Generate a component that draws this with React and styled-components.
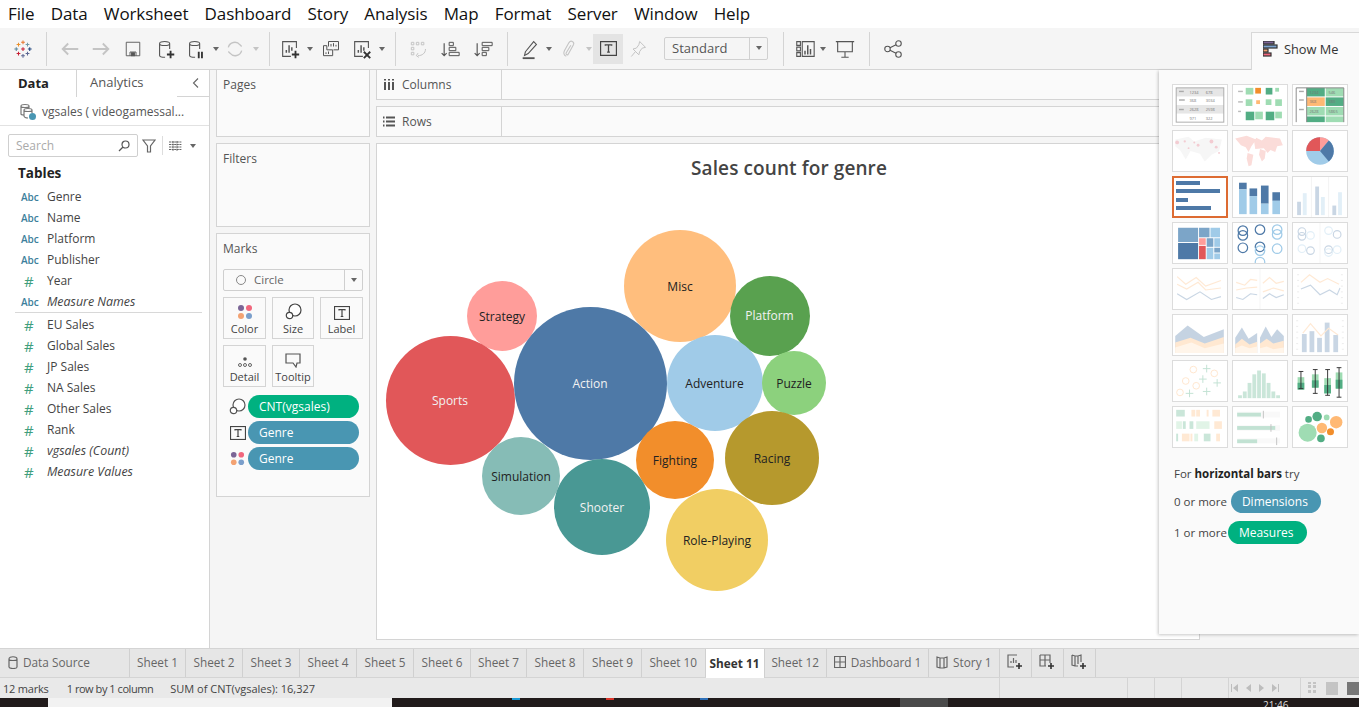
import React from 'react';
import styled, { createGlobalStyle } from 'styled-components';

const GlobalStyle = createGlobalStyle`
  html, body { margin: 0; padding: 0; background: #fff; }
  body { font-family: "Open Sans", "Liberation Sans", sans-serif; overflow: hidden; }
  * { box-sizing: border-box; }
`;

const Page = styled.div`
  width: 1359px;
  height: 707px;
  display: flex;
  flex-direction: column;
  position: relative;
  overflow: hidden;
`;

/* menu */
const MenuBar = styled.div`
  height: 28px;
  display: flex;
  align-items: center;
  padding: 0 0 2px 8px;
  gap: 16.2px;
  background: #fff;
  color: #111;
  font-size: 17px;
  font-family: "Open Sans", sans-serif;
  letter-spacing: -0.1px;
`;

/* toolbar */
const Toolbar = styled.div`
  height: 42px;
  display: flex;
  align-items: center;
  padding-left: 8px;
  background: #f5f5f5;
  border-bottom: 1px solid #d4d4d4;
`;
const Tool = styled.div`
  width: ${p => p.$w || 30}px;
  height: 30px;
  display: flex;
  align-items: center;
  justify-content: center;
  flex: none;
  color: ${p => (p.$off ? '#c4c4c4' : '#555')};
  background: ${p => (p.$active ? '#e4e4e4' : 'transparent')};
`;
const ToolDivider = styled.div`
  width: 1px;
  height: 34px;
  flex: none;
  background: #d4d4d4;
  margin: 0 ${p => p.$r ?? 8}px 0 ${p => p.$l ?? 8}px;
`;
const Caret = styled.span`
  width: 0;
  height: 0;
  flex: none;
  border-left: 3.5px solid transparent;
  border-right: 3.5px solid transparent;
  border-top: 4px solid ${p => (p.$off ? '#c4c4c4' : '#666')};
`;
const FitSelect = styled.div`
  width: 104px;
  height: 23px;
  flex: none;
  margin: 0 15px 0 11px;
  display: flex;
  align-items: center;
  justify-content: space-between;
  border: 1px solid #d0d0d0;
  border-radius: 2px;
  background: #f5f5f5;
  color: #555;
  font-size: 13px;
  padding: 0 0 1px 7px;
`;
const SelectArrow = styled.div`
  width: 18px;
  height: 21px;
  display: flex;
  align-items: center;
  justify-content: center;
  border-left: 1px solid #d0d0d0;
`;
const ShowMeTab = styled.div`
  width: 108px;
  height: 38px;
  margin-left: auto;
  align-self: flex-end;
  margin-bottom: -1px;
  display: flex;
  align-items: center;
  gap: 6px;
  padding: 0 0 6px 11px;
  background: #fafafa;
  border: 1px solid #d8d8d8;
  border-bottom: none;
  border-right: none;
  font-size: 12.8px;
  color: #333;
  position: relative;
  z-index: 3;
`;

/* main */
const Main = styled.div`
  height: 578px;
  display: flex;
  background: #f5f5f5;
`;
const DataPane = styled.div`
  width: 210px;
  flex: none;
  background: #fff;
  border-right: 1px solid #d4d4d4;
  display: flex;
  flex-direction: column;
`;
const PaneTabs = styled.div`
  height: 27px;
  display: flex;
  align-items: center;
  font-size: 13px;
  color: #444;
  border-bottom: 1px solid #d4d4d4;
`;
const PaneTab = styled.div`
  width: ${p => p.$w}px;
  height: 27px;
  display: flex;
  align-items: center;
  padding: 0 0 2px ${p => p.$pad}px;
  background: #fff;
  font-weight: ${p => (p.$on ? 700 : 400)};
  color: ${p => (p.$on ? '#222' : '#555')};
  border-right: ${p => (p.$on ? '1px solid #d4d4d4' : 'none')};
  margin-bottom: ${p => (p.$on ? '-1px' : '0')};
`;
const PaneCollapse = styled.div`
  margin-left: auto;
  padding-right: 7px;
  display: flex;
  color: #666;
`;
const SourceRow = styled.div`
  height: 29px;
  display: flex;
  align-items: center;
  gap: 6px;
  padding-left: 20px;
  font-size: 12px;
  color: #555;
  border-bottom: 1px solid #e2e2e2;
`;
const SearchRow = styled.div`
  height: 25px;
  margin-top: 7px;
  padding-left: 8px;
  display: flex;
  align-items: center;
`;
const SearchBox = styled.div`
  width: 130px;
  height: 23px;
  display: flex;
  align-items: center;
  justify-content: space-between;
  padding: 0 7px;
  border: 1px solid #cfcfcf;
  border-radius: 2px;
  font-size: 12px;
  color: #aaa;
`;
const RowDivider = styled.div`
  width: 1px;
  height: 19px;
  background: #ddd;
  margin: 0 6px;
`;
const TablesTitle = styled.div`
  font-size: 13.5px;
  font-weight: 700;
  color: #222;
  padding-left: 18px;
  margin-top: 5px;
  height: 21px;
  line-height: 21px;
`;
const FieldList = styled.div`
  margin-top: 2px;
  display: flex;
  flex-direction: column;
`;
const FieldRow = styled.div`
  height: 21px;
  display: flex;
  align-items: center;
  font-size: ${p => (p.$italic ? '12.4px' : '12px')};
  color: #444;
  font-style: ${p => (p.$italic ? 'italic' : 'normal')};
`;
const FieldType = styled.span`
  width: 47px;
  flex: none;
  padding-left: 21px;
  font-size: 10px;
  font-style: normal;
  color: ${p => (p.$measure ? '#3f9e7d' : '#3d7f9c')};
  font-weight: 600;
`;
const FieldHash = styled(FieldType)`
  font-size: 15px;
  font-weight: 400;
  padding-left: 24px;
`;
const FieldSeparator = styled.div`
  height: 1px;
  background: #d8d8d8;
  margin: 0 7px 1px 15px;
`;

const ShelfColumn = styled.div`
  width: 166px;
  flex: none;
  padding: 0 6px;
  display: flex;
  flex-direction: column;
  gap: 6px;
`;
const Card = styled.div`
  height: ${p => p.$h}px;
  flex: none;
  background: #fafafa;
  border: 1px solid #d4d4d4;
  border-top: ${p => (p.$flush ? 'none' : '1px solid #d4d4d4')};
  padding: 7px 6px 0;
  font-size: 12px;
  color: #555;
`;
const CardTitle = styled.div`
  height: 16px;
  line-height: 16px;
`;
const MarkSelect = styled.div`
  height: 22px;
  margin-top: 12px;
  display: flex;
  align-items: center;
  border: 1px solid #cfcfcf;
  border-radius: 2px;
  padding: 0 0 1px 12px;
  gap: 8px;
  font-size: 11.5px;
  color: #666;
`;
const MarkDot = styled.span`
  width: 10px;
  height: 10px;
  border-radius: 50%;
  border: 1.5px solid #888;
`;
const MarkArrow = styled.div`
  margin-left: auto;
  width: 18px;
  height: 20px;
  display: flex;
  align-items: center;
  justify-content: center;
  border-left: 1px solid #cfcfcf;
`;
const MarkGrid = styled.div`
  display: grid;
  grid-template-columns: 43px 42px 43px;
  grid-auto-rows: 42px;
  gap: 6px;
  margin-top: 6px;
`;
const MarkBtn = styled.div`
  border: 1px solid #d4d4d4;
  display: flex;
  flex-direction: column;
  align-items: center;
  justify-content: flex-end;
  gap: 1px;
  padding-bottom: 2px;
  font-size: 11px;
  color: #444;
`;
const PillList = styled.div`
  margin-top: 8px;
  display: flex;
  flex-direction: column;
  gap: 3px;
`;
const PillRow = styled.div`
  height: 23px;
  display: flex;
  align-items: center;
  gap: 2px;
  padding-left: 6px;
`;
const PillIcon = styled.div`
  width: 17px;
  display: flex;
  justify-content: center;
  color: #555;
`;
const Pill = styled.div`
  width: ${p => p.$w || 111}px;
  height: 23px;
  border-radius: 12px;
  display: flex;
  align-items: center;
  padding-left: ${p => p.$pad || 11}px;
  background: ${p => (p.$measure ? '#00b180' : '#4996b2')};
  color: #fff;
  font-size: 12px;
`;

const Workspace = styled.div`
  flex: 1;
  min-width: 0;
  display: flex;
  flex-direction: column;
  gap: 6px;
`;
const ShelfRow = styled.div`
  height: ${p => p.$h}px;
  flex: none;
  display: flex;
  background: #fafafa;
  border: 1px solid #d4d4d4;
  border-top: ${p => (p.$flush ? 'none' : '1px solid #d4d4d4')};
  width: 790px;
`;
const ShelfLabel = styled.div`
  width: 125px;
  display: flex;
  align-items: center;
  gap: 7px;
  padding-left: 6px;
  font-size: 12px;
  color: #555;
  border-right: 1px solid #d4d4d4;
`;
const Viz = styled.div`
  width: 824px;
  height: 497px;
  flex: none;
  background: #fff;
  border: 1px solid #d4d4d4;
  position: relative;
`;
const VizTitle = styled.div`
  height: 50px;
  padding-top: 11px;
  width: 824px;
  text-align: center;
  font-size: 19px;
  font-weight: 600;
  color: #444;
  letter-spacing: 0.1px;
`;
const Bubble = styled.div`
  position: absolute;
  border-radius: 50%;
  display: flex;
  align-items: center;
  justify-content: center;
  font-size: 12px;
  color: ${p => (p.$dark ? '#222' : '#f2f2f2')};
  background: ${p => p.$bg};
`;

/* show me */
const ShowMePanel = styled.div`
  position: absolute;
  left: 1159px;
  top: 70px;
  width: 200px;
  height: 564px;
  background: #fafafa;
  box-shadow: -1px 1px 3px rgba(0, 0, 0, 0.22);
  padding: 14px 0 0 13px;
  z-index: 2;
  font-size: 11.5px;
  color: #444;
`;
const ThumbGrid = styled.div`
  display: grid;
  grid-template-columns: repeat(3, 56px);
  grid-auto-rows: 42px;
  gap: 4px;
`;
const Thumb = styled.div`
  background: #fff;
  border: ${p => (p.$on ? '2px solid #dd6b32' : '1px solid #dcdcdc')};
  overflow: hidden;
  display: flex;
  svg { width: 100%; height: 100%; display: block; }
`;
const HintTitle = styled.div`
  margin: 18px 0 0 2px;
  height: 16px;
  line-height: 16px;
  b { color: #222; font-weight: 700; }
`;
const HintRow = styled.div`
  display: flex;
  align-items: center;
  gap: ${p => p.$gap}px;
  margin: 8px 0 0 2px;
  height: 23px;
`;

/* tabs + status */
const TabStrip = styled.div`
  height: 30px;
  display: flex;
  background: #e6e6e6;
  border-top: 1px solid #d4d4d4;
  border-bottom: 1px solid #d4d4d4;
`;
const SheetTab = styled.div`
  width: ${p => p.$w}px;
  flex: none;
  display: flex;
  align-items: center;
  justify-content: ${p => (p.$left ? 'flex-start' : 'center')};
  gap: 5px;
  padding: 0 0 2px ${p => (p.$left ? '8px' : '0')};
  border-right: 1px solid #d0d0d0;
  font-size: 11.8px;
  color: ${p => (p.$on ? '#333' : '#666')};
  font-weight: ${p => (p.$on ? 700 : 400)};
  background: ${p => (p.$on ? '#fff' : 'transparent')};
  margin-bottom: ${p => (p.$on ? '-1px' : '0')};
`;
const StatusBar = styled.div`
  height: 20px;
  display: flex;
  align-items: center;
  background: #e9e9e9;
  font-size: 11px;
  color: #444;
`;
const StatusText = styled.span`
  margin-left: ${p => p.$l}px;
  letter-spacing: ${p => p.$ls}px;
`;
const StatusCell = styled.div`
  width: ${p => p.$w}px;
  height: 20px;
  flex: none;
  display: flex;
  align-items: center;
  gap: ${p => p.$gap || 8}px;
  padding-left: ${p => p.$pad || 0}px;
  border-left: 1px solid #d4d4d4;
`;
const NavMark = styled.span`
  width: 0;
  height: 0;
  border-top: 4px solid transparent;
  border-bottom: 4px solid transparent;
  border-${p => (p.$right ? 'left' : 'right')}: 5px solid #bdbdbd;
`;
const NavStop = styled.span`
  width: 1px;
  height: 8px;
  margin: 0 -7px;
  background: #bdbdbd;
`;
const ViewGrid = styled.span`
  width: 12px;
  height: 12px;
  background: repeating-linear-gradient(90deg, #c4c4c4 0 3px, transparent 3px 4.5px),
    repeating-linear-gradient(0deg, #e9e9e9 0 1.5px, transparent 1.5px 4.5px);
  background-blend-mode: lighten;
`;
const ViewBox = styled.span`
  width: 12px;
  height: 13px;
  flex: none;
  background: ${p => p.$c};
`;
const Taskbar = styled.div`
  height: 9px;
  display: flex;
  background: #211b1b;
  color: #ddd;
  font-size: 10px;
  position: relative;
  overflow: hidden;
`;
const TaskWindow = styled.div`
  width: ${p => p.$w}px;
  margin-left: ${p => p.$l}px;
  background: ${p => p.$c};
  flex: none;
`;
const TaskDot = styled.span`
  width: ${p => p.$w || 8}px;
  height: 2px;
  margin-left: ${p => p.$l}px;
  background: ${p => p.$c};
  flex: none;
`;
const Clock = styled.span`
  position: absolute;
  left: 1263px;
  top: 1px;
  line-height: 12px;
`;

const Svg = styled.svg`
  display: block;
  fill: none;
  stroke: currentColor;
  stroke-width: 1.2;
  flex: none;
`;

const Icon = ({ s = 24, children }) => <Svg width={s} height={s} viewBox="0 0 24 24">{children}</Svg>;

const TableauLogo = () => {
  const c = [[12, 3, '#e8762d'], [12, 21, '#5b6591'], [3, 12, '#59879b'], [21, 12, '#1f447e'], [6, 6, '#eb912b'], [18, 6, '#7099a6'], [6, 18, '#c72035'], [18, 18, '#5c6692'], [12, 12, '#c72035']];
  return (
    <Icon s={18}>
      {c.map(([x, y, col]) => (
        <path key={x + '-' + y} d={`M${x - 2.5} ${y}h5M${x} ${y - 2.5}v5`} stroke={col} strokeWidth="1.4" />
      ))}
    </Icon>
  );
};
const Plus = ({ x, y }) => <path d={`M${x - 4} ${y}h8M${x} ${y - 4}v8`} stroke="#333" strokeWidth="2" />;
const BarBox = ({ children }) => (
  <Icon s={22}>
    <path d="M19 11V4H4v16h9" />
    <path d="M8 16v-3M11 16V8M14 14v-4" strokeWidth="1.6" />
    {children}
  </Icon>
);
const Cylinder = ({ children }) => (
  <Icon s={22}>
    <path d="M5 6c0-3 11-3 11 0v6M5 6c0 3 11 3 11 0M5 6v13c0 1.5 3 2 6 2" />
    {children}
  </Icon>
);
const ColorDots = ({ s = 16 }) => (
  <Svg width={s} height={s} viewBox="0 0 16 16" stroke="none">
    <circle cx="4" cy="4" r="3" fill="#7b6596" stroke="none" />
    <circle cx="12" cy="4" r="3" fill="#f1677d" stroke="none" />
    <circle cx="4" cy="12" r="3" fill="#f3a272" stroke="none" />
    <circle cx="12" cy="12" r="3" fill="#7b9fcb" stroke="none" />
  </Svg>
);
const SizeIcon = () => (
  <Svg width={17} height={17} viewBox="0 0 17 17">
    <circle cx="10" cy="7" r="6" fill="#fff" />
    <circle cx="4.5" cy="12.5" r="3.2" fill="#fff" />
  </Svg>
);
const TextBox = ({ s = 16 }) => (
  <Svg width={s} height={s - 2} viewBox="0 0 16 14">
    <rect x=".5" y=".5" width="15" height="13" stroke="#444" />
    <path d="M5 4.5V3.6h6v.9M8 3.6v7M6.7 10.5h2.600" stroke="#444" />
  </Svg>
);
const DownCaret = () => <Caret />;

const bubbles = [
  ['Strategy', 502, 316, 35, '#ff9d9a', true],
  ['Misc', 680, 286, 56, '#ffbe7d', true],
  ['Platform', 769.5, 315.5, 40, '#59a14f', false],
  ['Sports', 450, 400, 64.5, '#e15759', false],
  ['Action', 590, 383, 76.5, '#4e79a7', false],
  ['Adventure', 714.5, 383, 48, '#a0cbe8', true],
  ['Puzzle', 794, 383, 32, '#8cd17d', true],
  ['Simulation', 521, 476, 39, '#86bcb6', true],
  ['Fighting', 675, 460, 39, '#f28e2b', true],
  ['Racing', 772, 458, 47, '#b6992d', true],
  ['Shooter', 602, 507, 48, '#499894', false],
  ['Role-Playing', 717, 540, 51, '#f1ce63', true],
];

const B = '#4e79a7', L = '#a0cbe8', G = '#9fdcb3', D = '#52ad84', O = '#ffb974';
const line = (pts, c, w = 1.2) => <polyline points={pts} fill="none" stroke={c} strokeWidth={w} />;
const rect = (x, y, w, h, c) => <rect key={`${x}-${y}-${w}`} x={x} y={y} width={w} height={h} fill={c} />;
const T = (x, y, t) => <text x={x} y={y} fontSize="4.2" fill="#777" fontFamily="Open Sans">{t}</text>;

const thumbs = [
  <>
    {rect(3, 3, 50, 36, '#fff')}
    {rect(3, 3, 50, 9, '#e6e6e6')}{rect(3, 21, 50, 9, '#e6e6e6')}
    {rect(6, 6, 5, 1.5, '#aaa')}{rect(6, 15, 6, 1.5, '#aaa')}{rect(6, 25, 5, 1.5, '#aaa')}
    {T(17, 9, '1234')}{T(34, 9, '678')}{T(17, 18, '368')}{T(34, 18, '3034')}{T(17, 27, '2628')}{T(34, 27, '2598')}{T(17, 37, '971')}{T(34, 37, '322')}
    <rect x="3" y="3" width="50" height="36" fill="none" stroke="#aaa" />
  </>,
  <>
    {[[5, 6, 5, 1.5, '#bbb'], [5, 17, 5, 1.5, '#bbb'], [5, 27, 3, 1.5, '#bbb']].map(r => rect(...r))}
    {rect(13, 3, 8, 7, G)}{rect(23, 3, 6, 6, '#f28e2b')}{rect(34, 3, 7, 7, D)}{rect(44, 3, 4, 4, G)}
    {rect(13, 15, 7, 7, G)}{rect(24, 16, 4, 4, O)}{rect(34, 15, 6, 6, G)}{rect(44, 15, 7, 7, G)}
    {rect(13, 28, 9, 9, D)}{rect(23, 28, 8, 8, G)}{rect(34, 28, 9, 9, D)}{rect(44, 28, 7, 7, G)}
  </>,
  <>
    {[[6, 6], [6, 15], [6, 25]].map(([x, y]) => rect(x, y, 5, 1.5, '#aaa'))}
    {rect(14, 3, 19, 9, D)}{rect(34, 3, 19, 9, G)}{rect(14, 13, 19, 9, O)}{rect(34, 13, 19, 9, D)}
    {rect(14, 23, 19, 9, G)}{rect(34, 23, 19, 9, G)}{rect(14, 33, 19, 6, D)}{rect(34, 33, 19, 6, G)}
    {T(17, 9.5, '1234')}{T(37, 9.5, '546')}{T(17, 19, '368')}{T(37, 19, '380')}{T(17, 29, '2628')}{T(37, 29, '5865')}
    <path d="M3 3h50v36M14 3v36M3 3v36" fill="none" stroke="#888" />
  </>,
  <>
    <path d="M2 9l14-3 6 5 12-4 17 2-3 12-8 4-7 7-5-8-10-3-5 9-6-10-5-4z" fill="#f6f6f6" />
    {[[4, 12, 2], [12, 11, 1.2], [22, 12, 1], [26, 15, 1.5], [40, 11, 2], [45, 17, 1.5], [16, 18, 1], [48, 23, 1]].map(([x, y, r]) => <circle key={x} cx={x} cy={y} r={r} fill="#f3ccd2" />)}
  </>,
  <path d="M2 8l12-3 10 4-5 7-3 6-3-5-5-2zM15 23l6 2-2 11-3 1-2-8zM24 7l6 3 4-4 15 2 3 7-6 1-2 6-5-2-3 3-4-5-9 1-1-7z M28 19l6 2-1 8-3 3-3-7z" fill="#fbdcd9" />,
  <>
    <circle cx="28" cy="21" r="14.500" fill={L} />
    <path d="M28 21V6.500A14.500 14.500 0 0 0 13.500 21z" fill="#e15759" />
    <path d="M28 21V6.500A14.500 14.500 0 0 1 37.300 9.900z" fill="#ff9d9a" />
    <path d="M28 21L37.300 9.900A14.500 14.500 0 0 1 37.300 32.100z" fill={B} />
  </>,
  <>
    {rect(4, 5, 24, 4, B)}{rect(4, 13, 44, 4, B)}{rect(4, 22, 12, 4, B)}{rect(4, 30, 35, 4, B)}
  </>,
  <>
    {rect(6, 6, 8, 7, B)}{rect(6, 13, 8, 26, L)}{rect(17, 12, 8, 8, B)}{rect(17, 20, 8, 19, L)}
    {rect(29, 9, 8, 19, B)}{rect(29, 28, 8, 11, L)}{rect(41, 16, 8, 9, B)}{rect(41, 25, 8, 14, L)}
  </>,
  <g opacity=".3">
    <path d="M19 0v42M37 0v42" stroke="#bbb" strokeWidth=".6" />
    {rect(4, 26, 4, 14, B)}{rect(10, 17, 4, 23, L)}{rect(23, 10, 4, 30, B)}{rect(29, 21, 4, 19, L)}{rect(41, 30, 4, 10, B)}{rect(47, 16, 4, 24, L)}
  </g>,
  <>
    {rect(5, 5, 21, 15, '#7ca5c8')}{rect(5, 21, 21, 17, B)}{rect(27, 5, 11, 10, '#7ca5c8')}{rect(27, 16, 7, 7, '#ff9d9a')}{rect(27, 24, 7, 14, '#e15759')}
    {rect(39, 5, 10, 10, L)}{rect(35, 16, 7, 9, '#7ca5c8')}{rect(43, 16, 6, 9, L)}{rect(35, 26, 7, 12, L)}{rect(43, 26, 6, 5, '#7ca5c8')}{rect(43, 32, 6, 6, L)}
  </>,
  <g fill="none" strokeWidth="1.3">
    {[[10, 8, B], [10, 13, B], [28, 7, B], [10, 26, B], [28, 25, B], [28, 29, L], [46, 7, L], [46, 12, L], [46, 27, L], [28, 41, L]].map(([x, y, c], i) => <circle key={i} cx={x} cy={y} r="5" stroke={c} />)}
  </g>,
  <g fill="none" strokeWidth="1.2" opacity=".3">
    <path d="M28 0v42" stroke="#bbb" strokeWidth=".5" />
    {[[9, 9, B], [9, 14, B], [18, 13, L], [9, 27, L], [18, 29, B], [37, 8, L], [46, 12, B], [46, 28, L], [37, 28, B], [37, 31, L]].map(([x, y, c], i) => <circle key={i} cx={x} cy={y} r="4" stroke={c} />)}
  </g>,
  <g opacity=".3">
    {line('4,8 13,16 24,9 34,18 50,12', O)}{line('4,16 14,21 26,14 34,22 50,20', O)}{line('4,26 14,32 28,24 40,32 50,29', B)}
  </g>,
  <g opacity=".3">
    <path d="M28 0v42" stroke="#bbb" strokeWidth=".5" />
    {line('3,14 12,17 18,11 25,12', O)}{line('3,22 14,20 25,19', O)}{line('3,30 10,32 18,26 25,27', B)}
    {line('31,15 38,9 45,15 53,13', O)}{line('31,24 42,20 53,23', O)}{line('31,31 38,26 45,30 53,27', B)}
  </g>,
  <g opacity=".3">
    {line('8,14 17,6 28,14 36,10 48,16', O)}{line('8,21 18,17 28,27 38,22 46,27 49,20', B)}
    <path d="M4 6h2M4 12h2M4 18h2M4 24h2M4 30h2M4 36h2M50 6h2M50 12h2M50 18h2M50 24h2M50 30h2M50 36h2" stroke="#999" strokeWidth=".6" />
  </g>,
  <g opacity=".32">
    <path d="M2 22l13-11 17 12 21-8v25H2z" fill={B} />
    <path d="M2 29l16-5 15 6 20-7v17H2z" fill={O} />
    <path d="M2 34l17-5 14 6 20-5v10H2z" fill="#ffe3c0" />
  </g>,
  <g opacity=".32">
    <path d="M2 24l7-11 7 12 9-6v21H2z" fill={B} /><path d="M2 31l7-6 8 6 8-3v12H2z" fill={O} /><path d="M2 35l7-3 8 3 8-2v7H2z" fill="#ffe3c0" />
    <path d="M28 24l6-12 6 11 6-8 7 7v18H28z" fill={B} /><path d="M28 30l7-5 7 5 11-3v13H28z" fill={O} /><path d="M28 35l7-2 7 3 11-2v6H28z" fill="#ffe3c0" />
  </g>,
  <g opacity=".3">
    {rect(9, 20, 5, 19, B)}{rect(17, 17, 5, 22, B)}{rect(25, 24, 5, 15, B)}{rect(33, 8, 5, 31, B)}{rect(42, 21, 5, 18, B)}
    {line('10,19 18,9 29,22 37,14 47,21', O)}
    <path d="M3 6h2M3 12h2M3 18h2M3 24h2M3 30h2M3 36h2M51 6h2M51 12h2M51 18h2M51 24h2M51 30h2M51 36h2" stroke="#999" strokeWidth=".6" />
  </g>,
  <g fill="none" strokeWidth="1" opacity=".35">
    {[[21, 9, O], [13, 21, O], [43, 13, O], [24, 26, O], [7, 33, O]].map(([x, y, c]) => <circle key={x} cx={x} cy={y} r="3.500" stroke={c} />)}
    <path d="M35 4v8M31 8h8M31 15v8M27 19h8M46 19v8M42 23h8M17 30v8M13 34h8M35 28v8M31 32h8" stroke={D} />
  </g>,
  <g opacity=".3">
    {[[5, 36, 3], [10, 32, 7], [15, 23, 16], [20, 14, 25], [25, 10, 29], [30, 13, 26], [35, 23, 16], [40, 32, 7], [45, 36, 3]].map(([x, y, h]) => rect(x, y, 4, h, D))}
  </g>,
  <>
    {[[8, 17, 13, 11, 29], [23, 14, 14, 9, 34], [36, 18, 16, 9, 36], [48, 12, 17, 7, 38]].map(([x, y, h, t, b]) => (
      <g key={x}>
        {rect(x - 3.5, y, 7, h, G)}{rect(x - 3.5, y + h * 0.45, 7, h * 0.55, D)}
        <path d={`M${x} ${t}V${b}M${x - 2.5} ${t}h5M${x - 2.5} ${b}h5`} stroke="#333" strokeWidth="1" fill="none" />
      </g>
    ))}
  </>,
  <g opacity=".3">
    {[[3, 3, 9, 7, D], [19, 3, 4, 7, O], [24, 3, 4, 7, O], [35, 3, 2, 7, O], [41, 3, 8, 7, O], [3, 15, 6, 8, G], [10, 15, 3, 8, D], [17, 15, 4, 8, D], [24, 15, 14, 8, G], [43, 15, 8, 8, O], [3, 28, 2, 8, D], [9, 28, 8, 8, O], [18, 28, 2, 8, O], [22, 28, 4, 8, G], [32, 28, 7, 8, D], [45, 28, 4, 8, O]].map(r => rect(...r))}
  </g>,
  <g opacity=".35">
    {rect(4, 5, 45, 6, '#f0f0f0')}{rect(4, 19, 45, 6, '#f0f0f0')}{rect(4, 33, 45, 5, '#f0f0f0')}
    {rect(4, 6, 25, 4, D)}{rect(4, 20, 40, 4, D)}{rect(4, 34, 21, 4, D)}
    {rect(31, 4, 1, 8, '#555')}{rect(39, 18, 1, 8, '#555')}{rect(45, 32, 1, 8, '#555')}
  </g>,
  <>
    <circle cx="15" cy="27" r="9.500" fill={G} /><circle cx="16" cy="13" r="3.500" fill={D} /><circle cx="25" cy="10" r="5" fill={D} />
    <circle cx="35" cy="11" r="3" fill={G} /><circle cx="30" cy="22" r="5.500" fill={O} /><circle cx="45" cy="16" r="6.500" fill={O} />
    <circle cx="39" cy="26" r="3.700" fill="#f28e2b" /><circle cx="29" cy="33" r="4" fill={D} />
  </>,
];

const fieldsTop = ['Genre', 'Name', 'Platform', 'Publisher'];
const measures = ['EU Sales', 'Global Sales', 'JP Sales', 'NA Sales', 'Other Sales', 'Rank'];
const sheetTabs = [
  ['Sheet 1', 56], ['Sheet 2', 57], ['Sheet 3', 57], ['Sheet 4', 57], ['Sheet 5', 57], ['Sheet 6', 57], ['Sheet 7', 56], ['Sheet 8', 57], ['Sheet 9', 58], ['Sheet 10', 63.5],
];

const App = () => (
  <Page>
    <GlobalStyle />
    <MenuBar>
      {['File', 'Data', 'Worksheet', 'Dashboard', 'Story', 'Analysis', 'Map', 'Format', 'Server', 'Window', 'Help'].map(m => <span key={m}>{m}</span>)}
    </MenuBar>

    <Toolbar>
      <Tool><TableauLogo /></Tool>
      <ToolDivider />
      <Tool $off><Icon s={22}><path d="M21 12H4M10 6l-6 6 6 6" strokeWidth="2" /></Icon></Tool>
      <Tool $off $w={32}><Icon s={22}><path d="M3 12h17M14 6l6 6-6 6" strokeWidth="2" /></Icon></Tool>
      <Tool $w={32}><Icon s={18}><path d="M3 3h18v18H3zM8 21v-5h8v5" /><rect x="10" y="17" width="4" height="4" fill="#555" /></Icon></Tool>
      <Tool $w={34}><Cylinder><Plus x={17} y={18} /></Cylinder></Tool>
      <Tool $w={26}><Cylinder><path d="M15 15v7M18.500 15v7" stroke="#333" strokeWidth="2" /></Cylinder></Tool>
      <Tool $w={14}><DownCaret /></Tool>
      <Tool $off $w={24}><Icon s={20}><path d="M4 10a8 8 0 0 1 14-3l2 2M20 14a8 8 0 0 1-14 3l-2-2" strokeWidth="1.6" /></Icon></Tool>
      <Tool $w={18}><Caret $off /></Tool>
      <ToolDivider $l={4} $r={5} />
      <Tool><BarBox><Plus x={18} y={18} /></BarBox></Tool>
      <Tool $w={10}><DownCaret /></Tool>
      <Tool $w={32}><Icon s={20}><path d="M9 9V3h12v10h-6M7 8H3v12h11v-7H7z" /><path d="M12 9V6M15 9V5M18 9V7M6 18v-2M9 18v-3" /></Icon></Tool>
      <Tool $w={30}><BarBox><path d="M14 15l7 7M21 15l-7 7" stroke="#333" strokeWidth="2" /></BarBox></Tool>
      <Tool $w={10}><DownCaret /></Tool>
      <ToolDivider $l={8} $r={7} />
      <Tool $off><Icon s={20}><path d="M4 4h3v3H4zM10 4h3v3h-3zM16 4h3v3h-3zM4 10h3v3H4zM4 16h3v3H4zM21 12c0 5-4 8-9 8M12 17l-2 3 3 2" /></Icon></Tool>
      <Tool $w={33}><Icon s={20}><path d="M5 5v15M2 17l3 3 3-3" strokeWidth="1.4" /><path d="M11 4h5v4h-5zM11 10h8v4h-8zM11 16h12v4H11z" /></Icon></Tool>
      <Tool $w={33}><Icon s={20}><path d="M5 5v15M2 17l3 3 3-3" strokeWidth="1.4" /><path d="M11 4h12v4H11zM11 10h8v4h-8zM11 16h5v4h-5z" /></Icon></Tool>
      <ToolDivider $l={8} $r={7} />
      <Tool><Icon s={22}><path d="M7 15l9-11 3 3-9 10-4 2z" /><path d="M4 22h13" strokeWidth="2" /></Icon></Tool>
      <Tool $w={8}><DownCaret /></Tool>
      <Tool $off $w={32}><Icon s={22}><path d="M9 20c-3-1-3-4-2-6l5-9c2-3 6-1 5 2l-6 11c-1 1-3 0-2-2l5-8" /></Icon></Tool>
      <Tool $w={8}><Caret $off /></Tool>
      <Tool $active $w={30}><TextBox s={17} /></Tool>
      <Tool $off $w={30}><Icon s={20}><path d="M14 3l7 7-4 1-3 4-1 4-7-7 4-1 3-4zM9 15l-5 6" /></Icon></Tool>
      <FitSelect>Standard<SelectArrow><DownCaret /></SelectArrow></FitSelect>
      <ToolDivider $l={0} $r={6} />
      <Tool><Icon s={22}><path d="M3 4h4v4H3zM3 10h4v4H3zM3 16h4v4H3zM9 4h13v16H9z" /><path d="M12 18v-4M15 18V8M18 18v-6" strokeWidth="1.6" /></Icon></Tool>
      <Tool $w={6}><DownCaret /></Tool>
      <Tool $w={38}><Icon s={22}><path d="M2 4h20M4 4v11h16V4M12 15v6M8 21h8" /></Icon></Tool>
      <ToolDivider $l={5} $r={7} />
      <Tool $w={32}><Icon s={22}><circle cx="18" cy="6" r="3" /><circle cx="6" cy="12" r="3" /><circle cx="18" cy="18" r="3" /><path d="M8.700 10.600l6.600-3.200M8.700 13.400l6.600 3.200" /></Icon></Tool>
      <ShowMeTab>
        <Svg width={15} height={16} viewBox="0 0 15 16" stroke="none">
          <rect y="0" width="11" height="3" fill="#7b6596" />
          <rect y="4" width="14" height="3" fill="#7ba3cf" />
          <rect y="8" width="5" height="3" fill="#f3a272" />
          <rect y="12" width="8" height="3" fill="#f1677d" />
        </Svg>
        Show Me
      </ShowMeTab>
    </Toolbar>

    <Main>
      <DataPane>
        <PaneTabs>
          <PaneTab $on $w={77} $pad={18}>Data</PaneTab>
          <PaneTab $w={100} $pad={13}>Analytics</PaneTab>
          <PaneCollapse><Icon s={12}><path d="M16 3l-9 9 9 9" strokeWidth="2.200" /></Icon></PaneCollapse>
        </PaneTabs>
        <SourceRow>
          <Svg width={16} height={17} viewBox="0 0 16 17" color="#777">
            <path d="M1 3c0-2 8-2 8 0v2M1 3c0 2 8 2 8 0M1 3v8c0 1 2 1 3 1M4 7c0-2 8-2 8 0v3M4 7c0 2 8 2 8 0M4 7v6c0 1 2 2 4 2" />
            <circle cx="12.500" cy="13.500" r="3.500" fill="#4996b2" stroke="none" />
          </Svg>
          vgsales ( videogamessal...
        </SourceRow>
        <SearchRow>
          <SearchBox>
            Search
            <Svg width={12} height={12} viewBox="0 0 12 12" color="#555"><circle cx="7.500" cy="4.500" r="3.500" /><path d="M5 7l-4 4" /></Svg>
          </SearchBox>
          <Svg width={14} height={14} viewBox="0 0 14 14" color="#666" style={{ marginLeft: 4 }}><path d="M1 1h12L8.500 7v6h-3V7z" /></Svg>
          <RowDivider />
          <Svg width={13} height={10} viewBox="0 0 13 10" color="#666"><path d="M0 1h13M0 3.500h13M0 6h13M0 8.500h13M4 0v10M8 0v10" strokeWidth="1" strokeDasharray="2 .6" /></Svg>
          <span style={{ width: 8 }} />
          <DownCaret />
        </SearchRow>
        <TablesTitle>Tables</TablesTitle>
        <FieldList>
          {fieldsTop.map(f => (
            <FieldRow key={f}><FieldType>Abc</FieldType>{f}</FieldRow>
          ))}
          <FieldRow><FieldHash $measure>#</FieldHash>Year</FieldRow>
          <FieldRow $italic><FieldType>Abc</FieldType>Measure Names</FieldRow>
          <FieldSeparator />
          {measures.map(f => (
            <FieldRow key={f}><FieldHash $measure>#</FieldHash>{f}</FieldRow>
          ))}
          <FieldRow $italic><FieldHash $measure>#</FieldHash>vgsales (Count)</FieldRow>
          <FieldRow $italic><FieldHash $measure>#</FieldHash>Measure Values</FieldRow>
        </FieldList>
      </DataPane>

      <ShelfColumn>
        <Card $flush $h={67}><CardTitle>Pages</CardTitle></Card>
        <Card $h={84}><CardTitle>Filters</CardTitle></Card>
        <Card $h={264}>
          <CardTitle>Marks</CardTitle>
          <MarkSelect>
            <MarkDot />
            Circle
            <MarkArrow><DownCaret /></MarkArrow>
          </MarkSelect>
          <MarkGrid>
            <MarkBtn><ColorDots />Color</MarkBtn>
            <MarkBtn><SizeIcon />Size</MarkBtn>
            <MarkBtn><TextBox />Label</MarkBtn>
            <MarkBtn>
              <Svg width={16} height={14} viewBox="0 0 16 14" color="#555">
                <circle cx="8" cy="5" r="1.800" fill="#555" stroke="none" />
                <circle cx="3" cy="11" r="1.500" strokeWidth=".9" /><circle cx="8" cy="11" r="1.500" strokeWidth=".9" /><circle cx="13" cy="11" r="1.500" strokeWidth=".9" />
              </Svg>
              Detail
            </MarkBtn>
            <MarkBtn>
              <Svg width={16} height={15} viewBox="0 0 16 15" color="#555"><path d="M1 1h14v9h-3l-1 4-3-4H1z" /></Svg>
              Tooltip
            </MarkBtn>
          </MarkGrid>
          <PillList>
            <PillRow><PillIcon><SizeIcon /></PillIcon><Pill $measure>CNT(vgsales)</Pill></PillRow>
            <PillRow><PillIcon><TextBox /></PillIcon><Pill>Genre</Pill></PillRow>
            <PillRow><PillIcon><ColorDots s={15} /></PillIcon><Pill>Genre</Pill></PillRow>
          </PillList>
        </Card>
      </ShelfColumn>

      <Workspace>
        <ShelfRow $flush $h={30}>
          <ShelfLabel>
            <Svg width={12} height={11} viewBox="0 0 12 11" color="#555"><path d="M2 3v8M6 3v8M10 3v8" strokeWidth="2" /><path d="M2 0v1.500M6 0v1.500M10 0v1.500" strokeWidth="2" /></Svg>
            Columns
          </ShelfLabel>
        </ShelfRow>
        <ShelfRow $h={31}>
          <ShelfLabel>
            <Svg width={12} height={11} viewBox="0 0 12 11" color="#555"><path d="M3 1.500h9M3 5.500h9M3 9.500h9M0 1.500h1.500M0 5.500h1.500M0 9.500h1.500" strokeWidth="1.800" /></Svg>
            Rows
          </ShelfLabel>
        </ShelfRow>
        <Viz>
          <VizTitle>Sales count for genre</VizTitle>
          {bubbles.map(([name, cx, cy, r, bg, dark]) => (
            <Bubble
              key={name}
              $bg={bg}
              $dark={dark}
              style={{ left: cx - r - 377, top: cy - r - 144, width: r * 2, height: r * 2 }}
            >
              {name}
            </Bubble>
          ))}
        </Viz>
      </Workspace>
    </Main>

    <ShowMePanel>
      <ThumbGrid>
        {thumbs.map((t, i) => (
          <Thumb key={i} $on={i === 6}>
            <svg viewBox={i === 6 ? '2 2 52 38' : '0 0 56 42'}>{t}</svg>
          </Thumb>
        ))}
      </ThumbGrid>
      <HintTitle>For <b>horizontal bars</b> try</HintTitle>
      <HintRow $gap={4}>0 or more <Pill $w={90} $pad={11}>Dimensions</Pill></HintRow>
      <HintRow $gap={1}>1 or more <Pill $measure $w={79} $pad={11}>Measures</Pill></HintRow>
    </ShowMePanel>

    <TabStrip>
      <SheetTab $w={130} $left>
        <Svg width={10} height={13} viewBox="0 0 10 13" color="#666"><path d="M1 3c0-3 8-3 8 0v8c0 2-8 2-8 0zM1 3c0 2 8 2 8 0" /></Svg>
        Data Source
      </SheetTab>
      {sheetTabs.map(([n, w]) => <SheetTab key={n} $w={w}>{n}</SheetTab>)}
      <SheetTab $on $w={59}>Sheet 11</SheetTab>
      <SheetTab $w={62.5}>Sheet 12</SheetTab>
      <SheetTab $w={102}>
        <Svg width={12} height={12} viewBox="0 0 12 12" color="#666"><path d="M.5.5h11v11H.5zM6 .5v11M.5 6h11" /></Svg>
        Dashboard 1
      </SheetTab>
      <SheetTab $w={70.5}>
        <Svg width={12} height={13} viewBox="0 0 12 13" color="#666"><path d="M1 1l3 1h4l3-1v10l-3 1H4l-3-1zM4 2v10M8 2v10" /></Svg>
        Story 1
      </SheetTab>
      <SheetTab $w={32}>
        <Svg width={16} height={16} viewBox="0 0 16 16" color="#666"><path d="M10 1H1v12h6M4 9V7M6.500 9V4M9 9V6" /><path d="M12 9v6M9 12h6" stroke="#333" strokeWidth="1.600" /></Svg>
      </SheetTab>
      <SheetTab $w={32}>
        <Svg width={16} height={16} viewBox="0 0 16 16" color="#666"><path d="M1 1h10v8M1 1v11h6M6 1v11M1 6h10" /><path d="M12 9v6M9 12h6" stroke="#333" strokeWidth="1.600" /></Svg>
      </SheetTab>
      <SheetTab $w={32}>
        <Svg width={16} height={16} viewBox="0 0 16 16" color="#666"><path d="M1 1l3 1h3l3-1v7M1 1v10l3 1h3M4 2v10M7 2v8" /><path d="M12 9v6M9 12h6" stroke="#333" strokeWidth="1.600" /></Svg>
      </SheetTab>
    </TabStrip>

    <StatusBar>
      <StatusText $l={3} $ls={-0.2}>12 marks</StatusText>
      <StatusText $l={18} $ls={-0.45}>1 row by 1 column</StatusText>
      <StatusText $l={17} $ls={0}>SUM of CNT(vgsales): 16,327</StatusText>
      <span style={{ marginLeft: 'auto' }} />
      <StatusCell $w={128} />
      <StatusCell $w={27} />
      <StatusCell $w={27} />
      <StatusCell $w={47} />
      <StatusCell $w={72} $pad={9}>
        <NavStop /><NavMark /><NavMark /><NavMark $right /><NavMark $right /><NavStop />
      </StatusCell>
      <StatusCell $w={59} $pad={7} $gap={9}><ViewGrid /><ViewBox $c="#c4c4c4" /><ViewBox $c="#777" /></StatusCell>
    </StatusBar>

    <Taskbar>
      <TaskWindow $l={48} $w={344} $c="#f2f2f2" />
      <TaskDot $l={120} $c="#1a9ad6" />
      <TaskDot $l={86} $c="#d9362b" />
      <TaskDot $l={86} $c="#2e6fb7" />
      <TaskWindow $l={192} $w={48} $c="#4a4a4a" />
      <Clock>21:46</Clock>
    </Taskbar>
  </Page>
);

export default App;
